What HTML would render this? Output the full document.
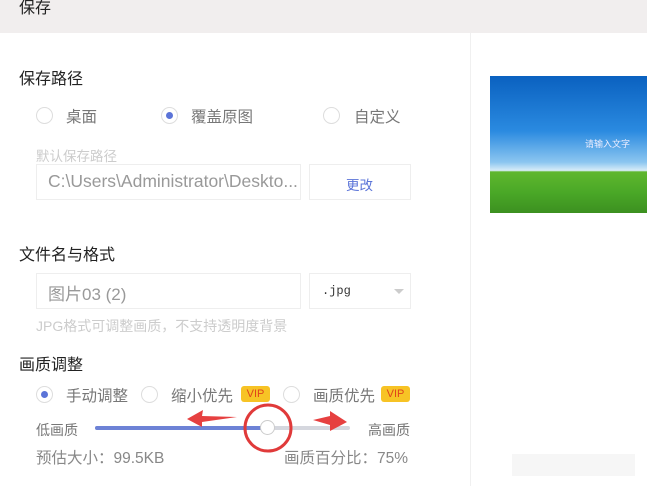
<!DOCTYPE html><html><head><meta charset="utf-8"><style>
body{margin:0;width:647px;height:486px;overflow:hidden;background:#fff;font-family:"Liberation Sans","Noto Sans CJK SC",sans-serif;position:relative}
.a{position:absolute;white-space:nowrap}
.h{font-size:16px;color:#222}
.r{position:absolute;width:17px;height:17px;border:1px solid #ddd;border-radius:50%;box-sizing:border-box;background:#fff}
.r.on::after{content:"";position:absolute;left:4px;top:4px;width:7px;height:7px;border-radius:50%;background:#5b74d8}
.l{font-size:15.5px;color:#777}
.box{position:absolute;border:1px solid #eee;box-sizing:border-box}
.vip{position:absolute;background:#f7c325;color:#e0441a;font-size:11px;border-radius:3px;width:29px;height:16px;line-height:16px;text-align:center}
</style></head><body>
<div class="a" style="left:0;top:0;width:647px;height:33px;background:#f1eeee"></div>
<div class="a h" style="left:19px;top:-6px;font-size:16px">保存</div>
<div class="a" style="left:470px;top:33px;width:1px;height:453px;background:#f0f0f0"></div>
<div class="a" style="left:490px;top:76px;width:157px;height:137px;background:linear-gradient(#0a61c0 0%,#2a8ae0 40%,#8cc6f0 63%,#d8ecf8 69%,#5fb72d 70%,#4aa827 85%,#3c9020 100%)"></div>
<div class="a" style="left:585px;top:137px;font-size:9px;color:#eef">请输入文字</div>
<div class="a h" style="left:19px;top:65px">保存路径</div>
<div class="r" style="left:36px;top:107px"></div><div class="a l" style="left:66px;top:105px">桌面</div>
<div class="r on" style="left:161px;top:107px"></div><div class="a l" style="left:191px;top:105px">覆盖原图</div>
<div class="r" style="left:323px;top:107px"></div><div class="a l" style="left:354px;top:105px">自定义</div>
<div class="a" style="left:36px;top:145px;font-size:13.5px;color:#ccc">默认保存路径</div>
<div class="box" style="left:36px;top:164px;width:265px;height:36px"></div>
<div class="a" style="left:48px;top:171px;font-size:17.5px;color:#999">C:\Users\Administrator\Deskto...</div>
<div class="box" style="left:309px;top:164px;width:102px;height:36px"></div>
<div class="a" style="left:346px;top:174px;font-size:13.5px;color:#5b74d8">更改</div>
<div class="a h" style="left:19px;top:241px">文件名与格式</div>
<div class="box" style="left:36px;top:273px;width:265px;height:36px"></div>
<div class="a" style="left:48px;top:280px;font-size:17px;color:#999">图片03 (2)</div>
<div class="box" style="left:309px;top:273px;width:102px;height:36px"></div>
<div class="a" style="left:322px;top:284px;font-size:12px;color:#333;font-family:'Liberation Mono',monospace">.jpg</div>
<div class="a" style="left:394px;top:289px;width:0;height:0;border-left:5px solid transparent;border-right:5px solid transparent;border-top:5px solid #ccc"></div>
<div class="a" style="left:36px;top:316px;font-size:14px;color:#ccc">JPG格式可调整画质，不支持透明度背景</div>
<div class="a h" style="left:19px;top:351px">画质调整</div>
<div class="r on" style="left:36px;top:386px"></div><div class="a l" style="left:66px;top:384px">手动调整</div>
<div class="r" style="left:141px;top:386px"></div><div class="a l" style="left:171px;top:384px">缩小优先</div>
<div class="vip" style="left:241px;top:386px">VIP</div>
<div class="r" style="left:283px;top:386px"></div><div class="a l" style="left:313px;top:384px">画质优先</div>
<div class="vip" style="left:381px;top:386px">VIP</div>
<div class="a" style="left:36px;top:420px;font-size:14px;color:#777">低画质</div>
<div class="a" style="left:368px;top:420px;font-size:14px;color:#777">高画质</div>
<div class="a" style="left:95px;top:426px;width:255px;height:4px;background:#d5d7de;border-radius:2px"></div>
<div class="a" style="left:95px;top:426px;width:173px;height:4px;background:#6d82d6;border-radius:2px"></div>
<div class="a" style="left:260px;top:420px;width:15px;height:15px;border-radius:50%;background:#fff;border:1px solid #ccc;box-sizing:border-box"></div>
<svg class="a" style="left:0;top:0" width="647" height="486"><circle cx="268" cy="428" r="23" fill="none" stroke="#e03a3a" stroke-width="3"/>
<path d="M187 419 L203 410 L202 416 L237 417 L202 422 L202 427 Z" fill="#e64040"/>
<path d="M313 420 L330 416 L330 411 L347 422 L330 431 L330 425 Z" fill="#e64040"/></svg>
<div class="a" style="left:36px;top:446px;font-size:15.5px;color:#888">预估大小：99.5KB</div>
<div class="a" style="left:284px;top:446px;font-size:15.5px;color:#888">画质百分比：75%</div>
<div class="a" style="left:512px;top:454px;width:123px;height:22px;background:#f6f6f6"></div>
</body></html>
